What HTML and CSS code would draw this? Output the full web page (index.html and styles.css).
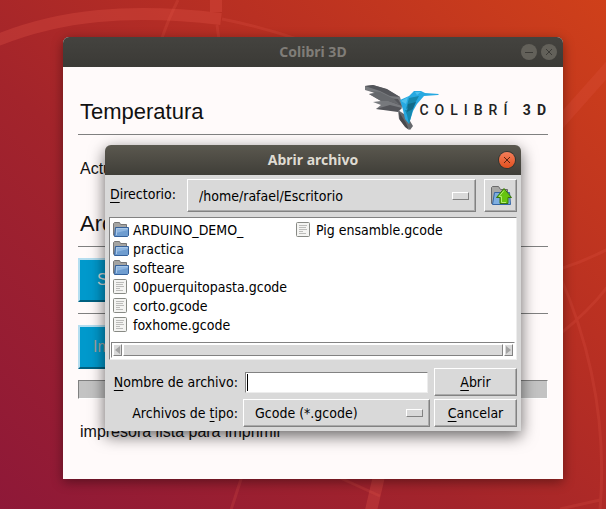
FILE: index.html
```html
<!DOCTYPE html>
<html lang="es">
<head>
<meta charset="utf-8">
<title>Colibri 3D</title>
<link rel="stylesheet" href="styles.css">
</head>
<body>
<svg class="wallpaper" viewBox="0 0 606 509" preserveAspectRatio="xMidYMid slice" aria-hidden="true">
  <g fill="none" stroke="#e8584a" stroke-opacity=".28">
    <path stroke-width="12" d="M-2 40C60 15 130 8 221 19"/>
    <path stroke-width="12" d="M216 0V12"/>
    <path stroke-width="3" stroke-opacity=".2" d="M178 0Q168 20 162 38M217 25L219 40M222 19Q262 27 300 40"/>
    <path stroke-width="12" stroke-opacity=".2" d="M612 64L556 127"/>
    <path stroke-width="12" d="M379 476L370 515"/>
    <path stroke-width="3" stroke-opacity=".2" d="M242 476L231 510M336 476L380 496M560 269Q585 261 608 249M608 286Q590 310 560 334M560 276Q610 390 600 510M560 509L600 500"/>
  </g>
</svg>
<main class="window">
  <header class="titlebar titlebar-inactive">
    <h1 class="title">Colibri 3D</h1>
    <div class="controls">
      <button class="control" type="button" aria-label="Minimizar"><svg viewBox="0 0 16 16"><path d="M4 8.500H12"/></svg></button>
      <button class="control" type="button" aria-label="Cerrar"><svg viewBox="0 0 16 16"><path d="M5 5L11 11M11 5L5 11"/></svg></button>
    </div>
  </header>
  <div class="content">
    <div class="heading-row">
      <h2 class="heading">Temperatura</h2>
      <div class="logo">
        <svg class="bird" viewBox="0 0 76 46" aria-hidden="true">
          <path fill="#77797d" d="M1 1L9 0 22 4 36 12 39 22 33 25 12 24 17 20 9 17 17 16 5 9 11 8 1 5Z"/>
          <path fill="#54555a" d="M1 1L9 0 23 4 36 12 26 11 16 6ZM17 13L38 21 34 14ZM12 24L26 20 38 23 34 27Z"/>
          <path fill="#66686c" d="M6 6L16 7 30 14 36 20 24 16 17 16 5 9 11 8Z"/>
          <path fill="#66686c" d="M34 25L43 31 49 41 46 45 40 40 35 34Z"/>
          <path fill="#47484c" d="M35 27L42 38 45 45 41 42 36 35Z"/>
          <path fill="#27a9e1" d="M36 15L45 11 50 6 57 6 61 8 75 9 74 10 60 11 53 19 49 26 45 39 41 34 39 25Z"/>
          <path fill="#1688ad" d="M45 13L55 11 50 20 42 24ZM41 25L49 24 45 39 43 30Z"/>
          <path fill="#116b8a" d="M44 19L52 17 49 24 43 27Z"/>
          <path fill="#4fc0ec" d="M37 16L44 12 42 19ZM51 7L57 7 53 10Z"/>
        </svg>
        <span class="logo-text">COLIBRÍ <b>3D</b></span>
      </div>
    </div>
    <p class="line">Actual</p>
    <h2 class="heading second">Archivo</h2>
    <div class="action"><button class="blue" type="button">Seleccionar</button></div>
    <div class="action last"><button class="blue print" type="button" disabled>Imprimir</button></div>
    <div class="progress" role="progressbar" aria-label="Progreso"></div>
    <p class="status">impresora lista para imprimir</p>
  </div>
</main>

<section class="dialog" role="dialog" aria-labelledby="dialog-title">
  <header class="titlebar">
    <h2 class="title" id="dialog-title">Abrir archivo</h2>
    <div class="controls">
      <button class="control close" type="button" aria-label="Cerrar"><svg viewBox="0 0 16 16"><path d="M5 5L11 11M11 5L5 11"/></svg></button>
    </div>
  </header>
  <form class="form">
    <div class="directory">
      <label for="dir"><u>D</u>irectorio:</label>
      <div class="picker raised"><select id="dir"><option>/home/rafael/Escritorio</option></select></div>
      <button class="up raised" type="button" aria-label="Subir un directorio">
        <svg viewBox="0 0 22 20"><path fill="#a8a8a6" stroke="#6a6a6a" d="M1.500 17.500V1.500L2.500 .5H8.500L10.500 3.500H17.500V17.500Z"/><path fill="#7eaee0" stroke="#3465a4" d="M2.500 18.500L4.500 6.500H19.500L20.500 18.500Z"/><path fill="#66c410" stroke="#38750c" d="M14 2.500L21.500 11.500H18V17.500H10V11.500H6.500Z"/><path fill="none" stroke="#b4ee72" d="M14 4.500L9 10.500H11.500V16.500H16"/></svg>
      </button>
    </div>
    <div class="files">
      <ul class="list">
        <li><svg class="icon"><use href="#folder"/></svg>ARDUINO_DEMO_</li>
        <li><svg class="icon"><use href="#folder"/></svg>practica</li>
        <li><svg class="icon"><use href="#folder"/></svg>softeare</li>
        <li><svg class="icon"><use href="#file"/></svg>00puerquitopasta.gcode</li>
        <li><svg class="icon"><use href="#file"/></svg>corto.gcode</li>
        <li><svg class="icon"><use href="#file"/></svg>foxhome.gcode</li>
        <li><svg class="icon"><use href="#file"/></svg>Pig ensamble.gcode</li>
      </ul>
      <div class="scrollbar">
        <button class="arrow" type="button" aria-label="Izquierda"><svg viewBox="0 0 5 8"><path d="M5 0V8L0 4Z"/></svg></button>
        <div class="thumb"></div>
        <button class="arrow" type="button" aria-label="Derecha"><svg viewBox="0 0 5 8"><path d="M0 0V8L5 4Z"/></svg></button>
      </div>
    </div>
    <div class="fields">
      <label for="name"><u>N</u>ombre de archivo:</label>
      <input class="name" id="name" type="text">
      <button class="push raised" type="submit"><u>A</u>brir</button>
      <label for="type">Archivos de <u>t</u>ipo:</label>
      <div class="picker raised"><select id="type"><option>Gcode (*.gcode)</option></select></div>
      <button class="push raised" type="button"><u>C</u>ancelar</button>
    </div>
  </form>
</section>

<svg class="symbols" aria-hidden="true">
  <symbol id="folder" viewBox="0 0 16 16"><path fill="#a4a4a2" stroke="#777" d="M.5 13.500V1.500L1.500 .5H6.500L7.500 2.500H13.500V6"/><path fill="#6f9dd0" stroke="#35619b" d="M1.500 14.500L2.500 5.500H15.500V13.500L14.500 14.500Z"/><path fill="#8fb6e0" d="M3 6H15V8L3 11Z"/><path fill="none" stroke="#a9c8e8" d="M3.500 13V6.500H14.500"/></symbol>
  <symbol id="file" viewBox="0 0 16 16"><rect x=".5" y=".5" width="13" height="14" rx="1" fill="#f4f4f2" stroke="#888a85"/><path stroke="#bcbcba" d="M3 3.500H11M3 5.500H10M3 7.500H11M3 9.500H7M3 11.500H10"/></symbol>
</svg>
</body>
</html>
```
FILE: styles.css
```css
* { box-sizing: border-box; }

body {
  margin: 0;
  min-height: 100vh;
  padding: 37px 43px 30px 63px;
  display: flex;
  background: linear-gradient(43deg, #8e1838 0%, #a3242b 40%, #b93022 68%, #cf401a 100%);
  font: 16px/20px "Liberation Sans", Arial, sans-serif;
  color: #111;
  position: relative;
  overflow: hidden;
}

h1, h2, p, ul { margin: 0; padding: 0; font-weight: normal; }
button, input, select { margin: 0; padding: 0; font: inherit; color: inherit; border: 0; border-radius: 0; }

.wallpaper { position: absolute; inset: 0; width: 100%; height: 100%; }
.symbols { position: absolute; width: 0; height: 0; }

.window {
  position: relative;
  flex: 1;
  background: #fffafa;
  border-radius: 6px 6px 0 0;
  box-shadow: 0 3px 12px rgba(0, 0, 0, .4);
}

.titlebar {
  display: grid;
  grid-template-columns: 1fr auto 1fr;
  align-items: center;
  height: 30px;
  padding: 0 6px;
  border-radius: 6px 6px 0 0;
  background: linear-gradient(#5b584f, #3f3e38);
  color: #dfdbd2;
}
.titlebar-inactive { background: linear-gradient(#44433f, #3b3a36); color: #807d78; }
.title { grid-column: 2; font: bold 14px/20px "Noto Sans", sans-serif; }
.controls { display: flex; gap: 4px; justify-self: end; }
.control {
  width: 16px;
  height: 16px;
  border-radius: 50%;
  background: #63615a;
  stroke: #3b3a36;
}
.control svg { display: block; fill: none; }
.close { background: linear-gradient(#f37e5a, #e2501f); box-shadow: 0 0 0 1px #35342f; stroke: #5a2412; }

.content { padding: 0 15px; }
.heading-row {
  display: flex;
  justify-content: space-between;
  height: 68px;
  padding: 18px 2px 0;
  border-bottom: 1px solid #808080;
}
.heading { font-size: 22px; line-height: 24px; }
.heading-row .heading { padding-top: 15px; }
.logo { display: flex; align-items: flex-start; }
.bird { width: 76px; height: 46px; margin-right: -21px; }
.logo-text {
  padding-top: 15px;
  margin-right: -6px;
  font: 500 14px/20px Roboto, sans-serif;
  letter-spacing: 6px;
  color: #222;
}
.line { padding: 24px 2px 0; }
.second { padding: 33px 2px 10px; border-bottom: 1px solid #808080; }
.action { padding: 11px 0; border-bottom: 1px solid #808080; }
.action.last { border: 0; }
.blue {
  display: block;
  height: 44px;
  padding: 0 17px;
  background: #0099cc;
  color: #d9d9d9;
  border: 2px solid #b5def0;
  border-bottom-color: #006080;
}
.print { padding: 0 13px; }
.blue:disabled { color: #a3a3a3; }
.progress { height: 19px; background: #c3c3c3; border: 1px solid #808080; border-right-color: #fff; border-bottom-color: #fff; }
.status { padding: 23px 2px 0; }

.dialog {
  position: absolute;
  top: 145px;
  left: 105px;
  right: 85px;
  background: #d9d9d9;
  border-radius: 6px 6px 0 0;
  box-shadow: 0 5px 16px rgba(0, 0, 0, .6);
  font: 14px/18px "DejaVu Sans Condensed", "DejaVu Sans", sans-serif;
  font-stretch: condensed;
  color: #000;
}
.form { padding: 4px; }
.form u { text-underline-offset: 3px; }
.raised { background: #d9d9d9; border: 1px solid; border-color: #fff #828282 #828282 #fff; box-shadow: inset -1px -1px #aaa; }
.directory { display: flex; align-items: stretch; height: 33px; }
.directory label { padding: 6px 11px 0 1px; }
.picker { display: flex; align-items: center; flex: 1; padding: 0 6px 0 11px; }
.picker select { flex: 1; min-width: 0; appearance: none; background: none; }
.picker::after { content: ""; width: 15px; height: 6px; border: 1px solid; border-color: #fff #828282 #828282 #fff; }
.up { width: 33px; margin-left: 8px; display: grid; place-items: center; }
.up svg { width: 22px; height: 20px; }

.files { margin-top: 5px; background: #fff; border: 1px solid; border-color: #828282 #ededed #ededed #828282; padding: 2px 1px 1px; }
.list {
  display: grid;
  grid-auto-flow: column;
  grid-template-rows: repeat(6, 19px);
  grid-template-columns: 183px 1fr;
  padding: 0 2px;
  list-style: none;
}
.list li { display: flex; align-items: center; gap: 4px; white-space: nowrap; }
.icon { width: 16px; height: 16px; }
.scrollbar { display: flex; gap: 1px; height: 16px; margin-top: 8px; padding: 1px; border: 1px solid; border-color: #828282 #fff #fff #828282; }
.arrow { width: 9px; display: grid; place-items: center; background: #d9d9d9; border: 1px solid; border-color: #fff #828282 #828282 #fff; }
.arrow svg { width: 5px; height: 8px; fill: #a3a3a3; }
.thumb { flex: 1; background: #d9d9d9; border: 1px solid; border-color: #fff #828282 #828282 #fff; }

.fields {
  display: grid;
  grid-template-columns: 130px 1fr 83px;
  grid-template-rows: 28px 28px;
  gap: 3px 4px;
  padding-top: 8px;
  align-items: stretch;
}
.fields label { align-self: center; text-align: right; padding-right: 1px; white-space: nowrap; }
.name {
  height: 21px;
  min-width: 0;
  margin: 0 2px;
  align-self: center;
  border: 1px solid;
  border-color: #828282 #ededed #ededed #828282;
  background: linear-gradient(#000, #000) 1px 1px / 1px 17px no-repeat, #fff;
}
```
